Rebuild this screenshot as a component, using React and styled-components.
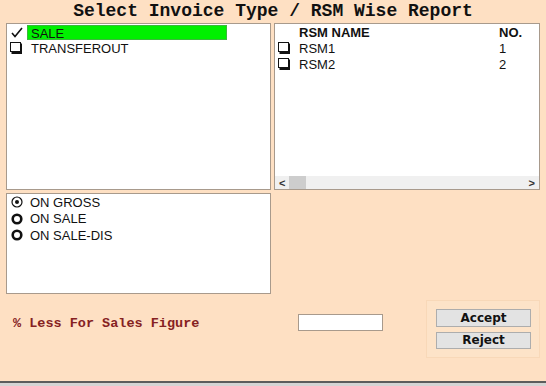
import { styled, createGlobalStyle } from 'styled-components';

const GlobalStyle = createGlobalStyle`
	body {
		margin: 0;
		background: #fee0c3;
		font-family: 'Liberation Sans', Arial, sans-serif;
	}
`;

const Window = styled.div`
	width: 546px;
	height: 386px;
	display: flex;
	flex-direction: column;
	background: #fee0c3;
	overflow: hidden;
`;

const Title = styled.h1`
	margin: 0;
	height: 23px;
	line-height: 23px;
	text-align: center;
	font-family: 'Liberation Mono', 'Courier New', monospace;
	font-size: 18px;
	font-weight: bold;
	color: #111;
`;

const Body = styled.div`
	display: grid;
	grid-template-columns: 265px 266px;
	grid-template-rows: 167px 101px;
	gap: 3px;
	padding: 0 6px;
`;

const Panel = styled.div`
	position: relative;
	background: #fff;
	border: 1px solid #a89a8c;
	box-sizing: border-box;
	padding: ${(props) => props.pad || '1px 3px'};
	font-size: 13px;
	color: #111;
`;

const Row = styled.div`
	display: flex;
	align-items: center;
	height: ${(props) => props.h || 15}px;
	gap: ${(props) => props.gap || 6}px;
`;

const IconBox = styled.span`
	display: flex;
	align-items: center;
	justify-content: center;
	width: 13px;
	height: 13px;
	flex-shrink: 0;
`;

const ItemText = styled.span`
	flex: ${(props) => (props.selected ? '0 0 200px' : '1')};
	height: 15px;
	line-height: 15px;
	padding-left: 3px;
	box-sizing: border-box;
	background: ${(props) => (props.selected ? '#00f000' : 'transparent')};
	border: 1px solid ${(props) => (props.selected ? '#3cb83c' : 'transparent')};
`;

const NameCell = styled.span`
	width: 192px;
	font-weight: ${(props) => (props.head ? 'bold' : 'normal')};
`;

const NoCell = styled.span`
	font-weight: ${(props) => (props.head ? 'bold' : 'normal')};
`;

const ScrollBar = styled.div`
	position: absolute;
	left: 0;
	right: 0;
	bottom: 0;
	height: 13px;
	background: #f0f0f0;
	display: flex;
	align-items: center;
	padding: 0 4px;
	box-sizing: border-box;
	font-size: 11px;
	font-weight: bold;
	color: #333;
`;

const Thumb = styled.div`
	width: 17px;
	height: 13px;
	background: #cdcdcd;
	margin-left: 4px;
	flex: 0 0 auto;
`;

const Spacer = styled.div`
	flex: 1;
`;

const Footer = styled.div`
	flex: 1;
	display: flex;
	align-items: flex-start;
	padding: 6px 6px 0 13px;
`;

const Label = styled.span`
	width: 285px;
	margin-top: 16px;
	font-family: 'Liberation Mono', 'Courier New', monospace;
	font-size: 13.5px;
	font-weight: bold;
	color: #862222;
`;

const Input = styled.input`
	width: 85px;
	height: 17px;
	margin-top: 14px;
	padding: 0;
	box-sizing: border-box;
	border: 1px solid #a89a8c;
	background: #fff;
`;

const ButtonGroup = styled.div`
	margin-left: auto;
	width: 114px;
	height: 58px;
	box-sizing: border-box;
	padding: 8px 9px;
	display: flex;
	flex-direction: column;
	gap: 5px;
	background: #fde3c8;
	border: 1px solid #f8d8b8;
`;

const Button = styled.button`
	height: 20px;
	width: 95px;
	padding: 0;
	background: #e3e3e3;
	border: 1px solid #adadad;
	font-family: Tahoma, 'DejaVu Sans', sans-serif;
	font-size: 12px;
	font-weight: bold;
	color: #111;
`;

const StatusLine = styled.div`
	height: 5px;
	border-top: 2px solid #5c5c5c;
	background: #d4d4d4;
	box-sizing: border-box;
`;

const Check = () => (
	<svg width="12" height="11" viewBox="0 0 12 11">
		<path d="M1 6 L4 9.5 L11 1" fill="none" stroke="#111" strokeWidth="1.6" />
	</svg>
);

const Box = () => (
	<svg width="13" height="12" viewBox="0 0 13 12">
		<rect x="0.5" y="0.5" width="10" height="9" fill="#fff" stroke="#111" />
		<path d="M11 1.5 V11 H1.5" fill="none" stroke="#111" strokeWidth="2" />
	</svg>
);

const Radio = ({ on }) =>
	on ? (
		<svg width="12" height="12" viewBox="0 0 12 12">
			<circle cx="6" cy="6" r="5" fill="#fff" stroke="#111" strokeWidth="1.2" />
			<circle cx="6" cy="6" r="2" fill="#111" />
		</svg>
	) : (
		<svg width="12" height="12" viewBox="0 0 12 12">
			<circle cx="6" cy="6" r="4.3" fill="#fff" stroke="#111" strokeWidth="2.6" />
		</svg>
	);

const invoiceTypes = [
	{ name: 'SALE', checked: true },
	{ name: 'TRANSFEROUT', checked: false },
];

const rsms = [
	{ name: 'RSM1', no: 1 },
	{ name: 'RSM2', no: 2 },
];

const options = ['ON GROSS', 'ON SALE', 'ON SALE-DIS'];

const App = () => {
	return (
		<Window>
			<GlobalStyle />
			<Title>Select Invoice Type / RSM Wise Report</Title>

			<Body>
				<Panel>
					{invoiceTypes.map((t) => (
						<Row key={t.name} gap={4}>
							<IconBox>{t.checked ? <Check /> : <Box />}</IconBox>
							<ItemText selected={t.checked}>{t.name}</ItemText>
						</Row>
					))}
				</Panel>

				<Panel pad="0 3px">
					<Row h={16} gap={8}>
						<IconBox />
						<NameCell head>RSM NAME</NameCell>
						<NoCell head>NO.</NoCell>
					</Row>
					{rsms.map((r) => (
						<Row key={r.name} h={16} gap={8}>
							<IconBox>
								<Box />
							</IconBox>
							<NameCell>{r.name}</NameCell>
							<NoCell>{r.no}</NoCell>
						</Row>
					))}
					<ScrollBar>
						<span>&lt;</span>
						<Thumb />
						<Spacer />
						<span>&gt;</span>
					</ScrollBar>
				</Panel>

				<Panel pad="0 3px">
					{options.map((o, i) => (
						<Row key={o} h={16.5} gap={7}>
							<IconBox>
								<Radio on={i === 0} />
							</IconBox>
							<span>{o}</span>
						</Row>
					))}
				</Panel>
			</Body>

			<Footer>
				<Label>% Less For Sales Figure</Label>
				<Input />
				<ButtonGroup>
					<Button>Accept</Button>
					<Button>Reject</Button>
				</ButtonGroup>
			</Footer>

			<StatusLine />
		</Window>
	);
};

export default App;
